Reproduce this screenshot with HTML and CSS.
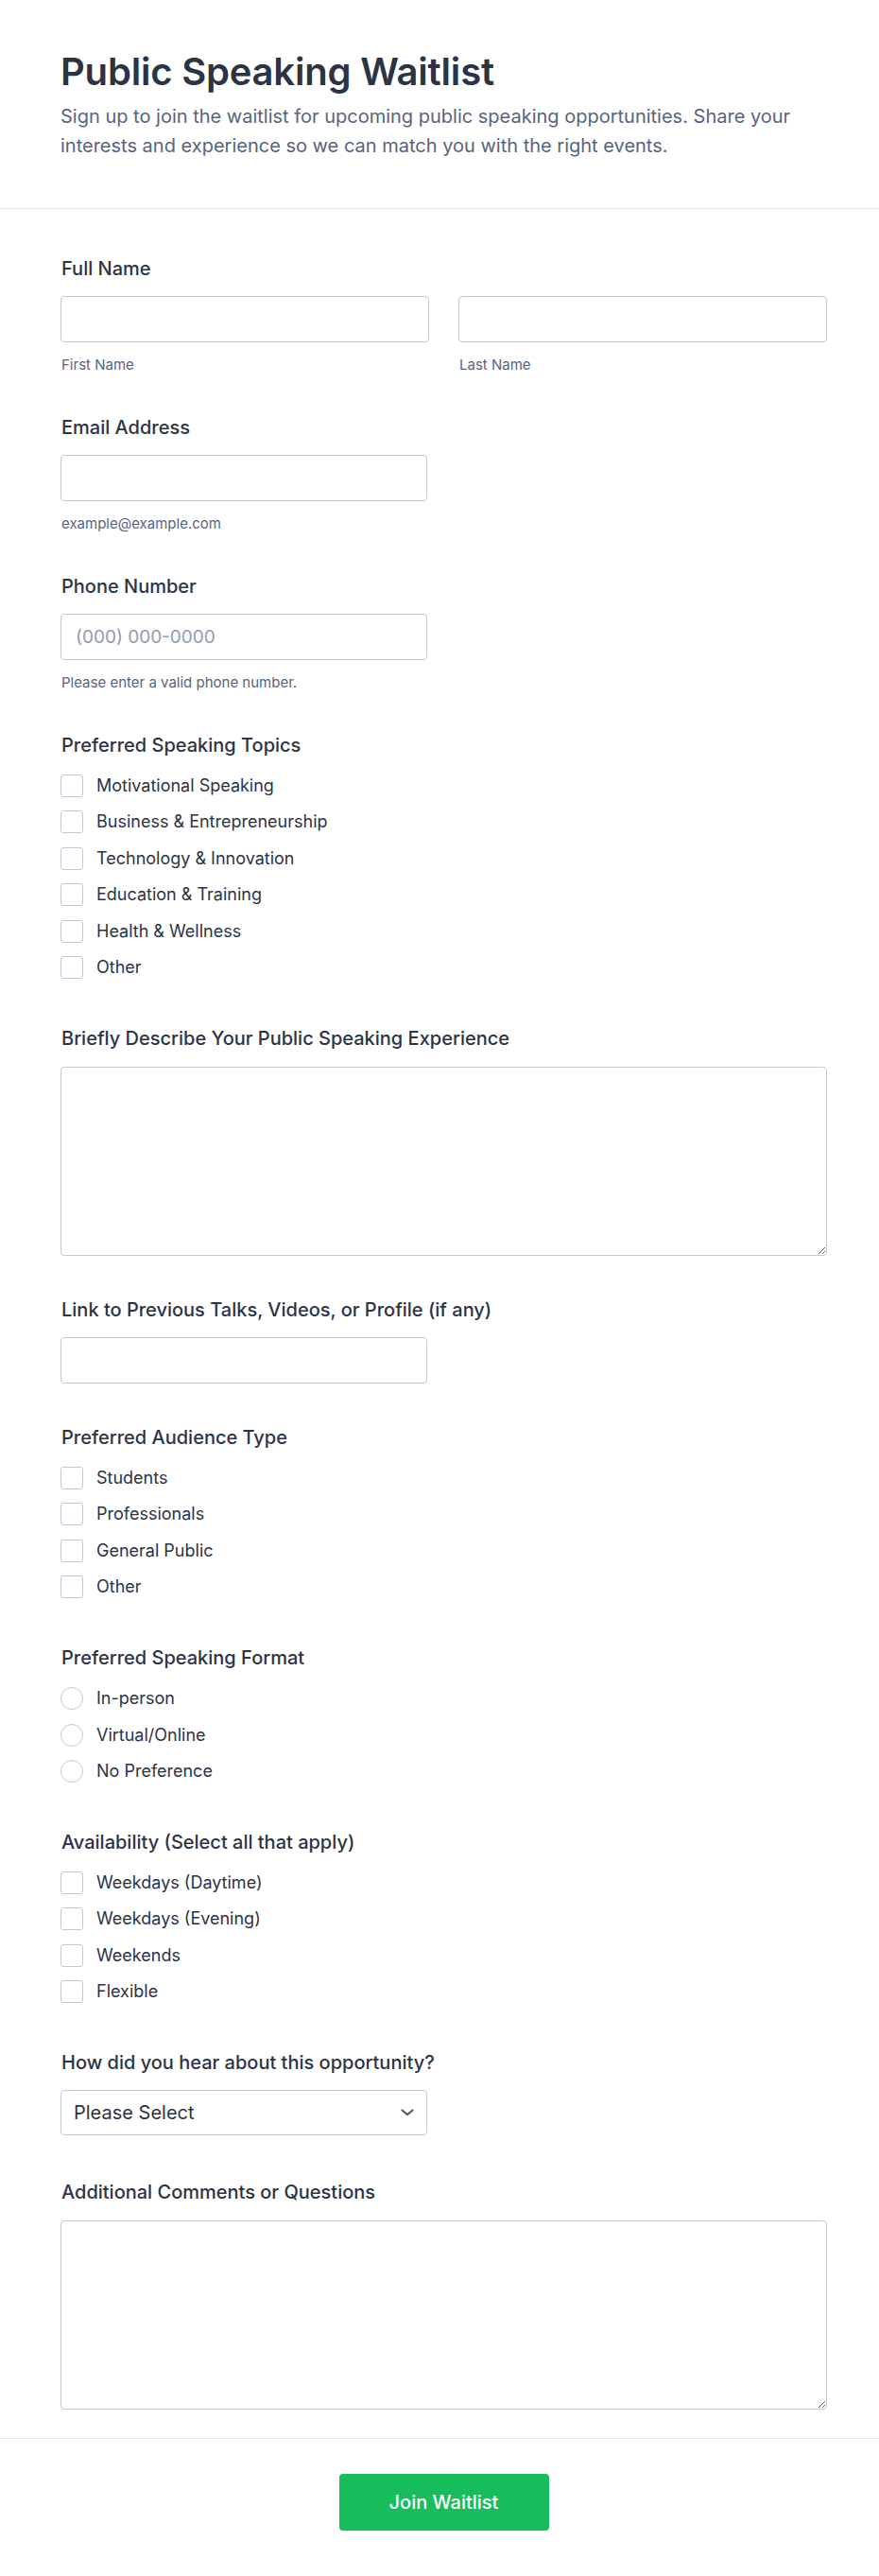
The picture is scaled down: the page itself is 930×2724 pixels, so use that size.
FILE: index.html
```html
<!DOCTYPE html>
<html lang="en">
<head>
<meta charset="utf-8">
<title>Public Speaking Waitlist</title>
<link rel="stylesheet" href="styles.css">
</head>
<body>
<div class="page">
  <header class="header">
    <h1 class="title">Public Speaking Waitlist</h1>
    <p class="desc">Sign up to join the waitlist for upcoming public speaking opportunities. Share your interests and experience so we can match you with the right events.</p>
  </header>

  <form class="form">
    <div class="field">
      <div class="label">Full Name</div>
      <div class="row2">
        <div class="col">
          <input class="input" type="text">
          <div class="sub">First Name</div>
        </div>
        <div class="col">
          <input class="input" type="text">
          <div class="sub">Last Name</div>
        </div>
      </div>
    </div>

    <div class="field">
      <div class="label">Email Address</div>
      <input class="input half" type="email">
      <div class="sub">example@example.com</div>
    </div>

    <div class="field">
      <div class="label">Phone Number</div>
      <input class="input half" type="tel" placeholder="(000) 000-0000">
      <div class="sub">Please enter a valid phone number.</div>
    </div>

    <div class="field group">
      <div class="label">Preferred Speaking Topics</div>
      <div class="options">
        <label class="opt"><input type="checkbox" class="box"><span>Motivational Speaking</span></label>
        <label class="opt"><input type="checkbox" class="box"><span>Business &amp; Entrepreneurship</span></label>
        <label class="opt"><input type="checkbox" class="box"><span>Technology &amp; Innovation</span></label>
        <label class="opt"><input type="checkbox" class="box"><span>Education &amp; Training</span></label>
        <label class="opt"><input type="checkbox" class="box"><span>Health &amp; Wellness</span></label>
        <label class="opt"><input type="checkbox" class="box"><span>Other</span></label>
      </div>
    </div>

    <div class="field tfield">
      <div class="label">Briefly Describe Your Public Speaking Experience</div>
      <textarea class="textarea"></textarea>
    </div>

    <div class="field single">
      <div class="label">Link to Previous Talks, Videos, or Profile (if any)</div>
      <input class="input half" type="url">
    </div>

    <div class="field group">
      <div class="label">Preferred Audience Type</div>
      <div class="options">
        <label class="opt"><input type="checkbox" class="box"><span>Students</span></label>
        <label class="opt"><input type="checkbox" class="box"><span>Professionals</span></label>
        <label class="opt"><input type="checkbox" class="box"><span>General Public</span></label>
        <label class="opt"><input type="checkbox" class="box"><span>Other</span></label>
      </div>
    </div>

    <div class="field group">
      <div class="label">Preferred Speaking Format</div>
      <div class="options">
        <label class="opt"><input type="radio" name="format" class="box radio"><span>In-person</span></label>
        <label class="opt"><input type="radio" name="format" class="box radio"><span>Virtual/Online</span></label>
        <label class="opt"><input type="radio" name="format" class="box radio"><span>No Preference</span></label>
      </div>
    </div>

    <div class="field group">
      <div class="label">Availability (Select all that apply)</div>
      <div class="options">
        <label class="opt"><input type="checkbox" class="box"><span>Weekdays (Daytime)</span></label>
        <label class="opt"><input type="checkbox" class="box"><span>Weekdays (Evening)</span></label>
        <label class="opt"><input type="checkbox" class="box"><span>Weekends</span></label>
        <label class="opt"><input type="checkbox" class="box"><span>Flexible</span></label>
      </div>
    </div>

    <div class="field sel">
      <div class="label">How did you hear about this opportunity?</div>
      <div class="select half">
        <span class="select-text">Please Select</span>
        <svg class="chev" width="14" height="8" viewBox="0 0 14 8" aria-hidden="true"><path d="M1.5 1.5 L7 6.2 L12.5 1.5" fill="none" stroke="#565d73" stroke-width="2.2" stroke-linecap="round" stroke-linejoin="round"/></svg>
      </div>
    </div>

    <div class="field tfield last">
      <div class="label">Additional Comments or Questions</div>
      <textarea class="textarea"></textarea>
    </div>
  </form>

  <footer class="footer">
    <button class="submit" type="button">Join Waitlist</button>
  </footer>
</div>
</body>
</html>
```

FILE: styles.css
```css
* { box-sizing: border-box; }

html, body {
  margin: 0;
  padding: 0;
  background: #ffffff;
}

body {
  font-family: Inter, "Noto Sans", "Liberation Sans", sans-serif;
  color: #2c3345;
}

.header {
  padding: 54px 55px 50px 64px;
  border-bottom: 1px solid #e2e4ec;
}

.title {
  margin: 0 0 10px;
  font-size: 40px;
  line-height: 44px;
  font-weight: 600;
  color: #2c3345;
  letter-spacing: -0.2px;
}

.desc {
  margin: 0;
  font-size: 20px;
  line-height: 31px;
  color: #57647e;
}

.form {
  padding: 49px 55px 30px 64px;
}

.field {
  margin-bottom: 42px;
}

.field.single {
  margin-bottom: 43px;
}

.field.group {
  margin-bottom: 47px;
}

.field.tfield {
  margin-bottom: 43px;
}

.field.sel {
  margin-bottom: 46px;
}

.field.last {
  margin-bottom: 0;
}

.label {
  font-size: 20px;
  line-height: 28px;
  font-weight: 500;
  color: #2c3345;
  margin-bottom: 15px;
  padding-left: 1px;
}

.tfield .label {
  margin-bottom: 16px;
}

.row2 {
  display: grid;
  grid-template-columns: 1fr 1fr;
  column-gap: 31px;
}

.input {
  display: block;
  width: 100%;
  height: 49px;
  border: 1px solid #c4c8d4;
  border-radius: 4px;
  background: #fff;
  padding: 0 15px;
  font-family: inherit;
  font-size: 19px;
  color: #2c3345;
  outline: none;
}

.input::placeholder {
  color: #8e9bb0;
}

.half {
  width: 388px;
}

.sub {
  margin-top: 14px;
  font-size: 15px;
  line-height: 20px;
  color: #57647e;
  padding-left: 1px;
}

.options {
  display: flex;
  flex-direction: column;
  gap: 10.4px;
}

.opt {
  display: flex;
  align-items: center;
  height: 28px;
  font-size: 18px;
  line-height: 28px;
  color: #2c3345;
}

.box {
  appearance: none;
  -webkit-appearance: none;
  margin: 0 14px 0 0;
  width: 24px;
  height: 24px;
  flex: none;
  border: 1px solid #c4c8d4;
  border-radius: 3px;
  background: #fff;
}

.box.radio {
  border-radius: 50%;
}

.textarea {
  display: block;
  width: 100%;
  height: 200px;
  border: 1px solid #c4c8d4;
  border-radius: 4px;
  background: #fff;
  font-family: inherit;
  font-size: 18px;
  padding: 12px 15px;
  outline: none;
  resize: vertical;
}

.select {
  display: flex;
  align-items: center;
  justify-content: space-between;
  height: 48px;
  border: 1px solid #c4c8d4;
  border-radius: 4px;
  background: #fff;
  padding: 0 13px 0 13px;
  font-size: 20px;
  color: #2c3345;
}

.chev {
  display: block;
}

.footer {
  border-top: 1px solid #e2e4ec;
  padding: 37px 55px 49px 64px;
  display: flex;
  justify-content: center;
}

.submit {
  width: 222px;
  height: 60px;
  border: none;
  border-radius: 4px;
  background: #18bd5b;
  color: #ffffff;
  font-family: inherit;
  font-size: 20px;
  font-weight: 500;
  cursor: pointer;
}
```
